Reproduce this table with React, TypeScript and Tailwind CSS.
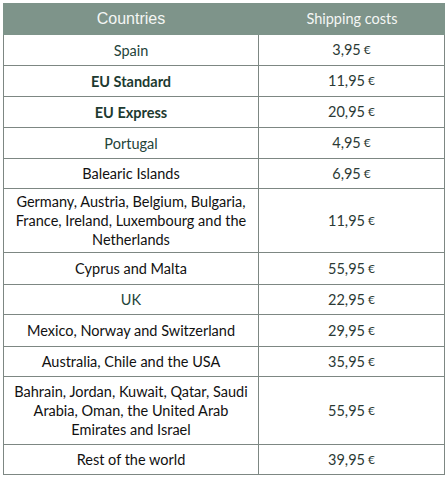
import React from "react";

type Row = { name: React.ReactNode; price: string; h: string; tone: "black" | "green" | "bold" };

const rows: Row[] = [
  { name: "Spain", price: "3,95", h: "h-[31px]", tone: "green" },
  { name: "EU Standard", price: "11,95", h: "h-[31px]", tone: "bold" },
  { name: "EU Express", price: "20,95", h: "h-[31px]", tone: "bold" },
  { name: "Portugal", price: "4,95", h: "h-[31px]", tone: "green" },
  { name: "Balearic Islands", price: "6,95", h: "h-[30px]", tone: "black" },
  {
    name: (
      <>
        Germany, Austria, Belgium, Bulgaria,
        <br />
        France, Ireland, Luxembourg and the
        <br />
        Netherlands
      </>
    ),
    price: "11,95",
    h: "h-[64px]",
    tone: "black",
  },
  { name: "Cyprus and Malta", price: "55,95", h: "h-[32px]", tone: "black" },
  { name: "UK", price: "22,95", h: "h-[30px]", tone: "green" },
  { name: "Mexico, Norway and Switzerland", price: "29,95", h: "h-[32px]", tone: "black" },
  { name: "Australia, Chile and the USA", price: "35,95", h: "h-[30px]", tone: "black" },
  {
    name: (
      <>
        Bahrain, Jordan, Kuwait, Qatar, Saudi
        <br />
        Arabia, Oman, the United Arab
        <br />
        Emirates and Israel
      </>
    ),
    price: "55,95",
    h: "h-[68px]",
    tone: "black",
  },
  { name: "Rest of the world", price: "39,95", h: "h-[29px]", tone: "black" },
];

export default function App() {
  return (
    <div className="w-[448px] h-[480px] bg-white pt-[3px] pl-[3px] font-['Lato',sans-serif]">
      <div className="w-[442px]">
        <div className="flex h-[32px] bg-[#7e948a] text-[#f4f6f4]">
          <div className="w-[256px] flex items-center justify-center font-['Liberation_Sans',Arial,sans-serif] text-[16px]">
            Countries
          </div>
          <div className="flex-1 flex items-center justify-center text-[14.5px]">Shipping costs</div>
        </div>
        <div className="border-l border-r border-b border-[#7d8783]">
          {rows.map((r, i) => (
            <div
              key={i}
              className={`flex box-border ${r.h} ${i < rows.length - 1 ? "border-b border-[#7d8783]" : ""}`}
            >
              <div
                className={`w-[255px] border-r border-[#7d8783] flex items-center justify-center text-center text-[14.5px] leading-[19px] ${
                  r.tone === "bold"
                    ? "font-bold text-[#1d3a30]"
                    : r.tone === "green"
                    ? "text-[#24443a]"
                    : "text-[#111111]"
                }`}
              >
                <span>{r.name}</span>
              </div>
              <div className="flex-1 flex items-center justify-center text-[14.5px] text-[#2c3a35]">
                {r.price}
                <span className="ml-[3px] text-[12px]">€</span>
              </div>
            </div>
          ))}
        </div>
      </div>
    </div>
  );
}
